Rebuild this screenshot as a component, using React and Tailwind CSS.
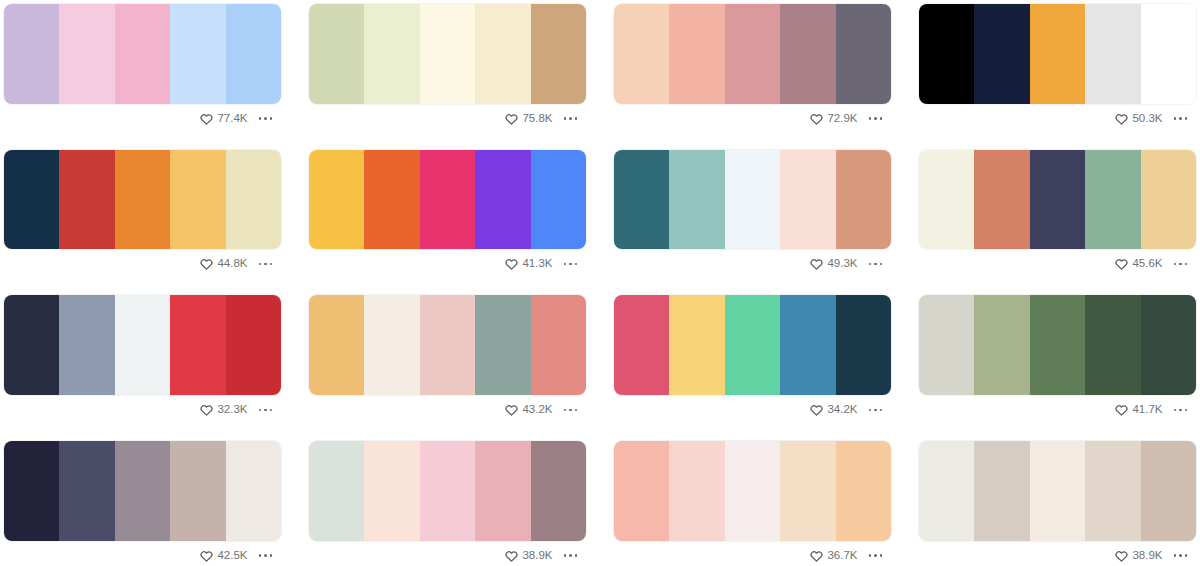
import React from "react";

const palettes = [
  { c: ["#c9b7dc", "#f5cbe0", "#f4b3cc", "#c6dffa", "#aad0f9"], l: "77.4K" },
  { c: ["#d1d9b5", "#eaefd0", "#fdf8e4", "#f6ecd0", "#cda67b"], l: "75.8K" },
  { c: ["#f7d0b8", "#f3b4a5", "#da999b", "#ab8189", "#6b6774"], l: "72.9K" },
  { c: ["#000000", "#151e3a", "#f0a83d", "#e5e5e5", "#ffffff"], l: "50.3K" },
  { c: ["#143049", "#c83a34", "#e8872f", "#f3c366", "#ebe3bb"], l: "44.8K" },
  { c: ["#f7c143", "#e9632c", "#e9336f", "#7a3be4", "#4f87f8"], l: "41.3K" },
  { c: ["#2e6b76", "#93c3bd", "#eff5f8", "#f9ded5", "#d9997c"], l: "49.3K" },
  { c: ["#f3f1e1", "#d48064", "#3d3f5c", "#8ab29b", "#eecf96"], l: "45.6K" },
  { c: ["#292d42", "#8e9aaf", "#eef2f2", "#e03b44", "#c92c33"], l: "32.3K" },
  { c: ["#eebf72", "#f5ece3", "#eccac3", "#8ba49d", "#e38b83"], l: "43.2K" },
  { c: ["#df5570", "#f8d377", "#62d4a3", "#3f89b0", "#1a3a4c"], l: "34.2K" },
  { c: ["#d6d5cb", "#a7b38d", "#607f58", "#3f5a41", "#354b3f"], l: "41.7K" },
  { c: ["#22233a", "#4a4c68", "#978c96", "#c5b2aa", "#efe9e3"], l: "42.5K" },
  { c: ["#d9e3dc", "#fae4da", "#f5ccd5", "#e9b1b7", "#9a7f85"], l: "38.9K" },
  { c: ["#f5b8aa", "#f6d6cf", "#f6eceb", "#f4dfc6", "#f6ca9e"], l: "36.7K" },
  { c: ["#ebeae3", "#d6ccc1", "#f3ebe0", "#e2d5ca", "#cfbdb0"], l: "38.9K" },
];

function Heart() {
  return (
    <svg width="13" height="12" viewBox="0 0 24 22" fill="none" stroke="#5f5f5f" strokeWidth="2.4" strokeLinejoin="round">
      <path d="M12 20.5 3.6 12.3A5.3 5.3 0 0 1 11.2 4.9L12 5.8l.8-.9a5.3 5.3 0 0 1 7.6 7.4Z" />
    </svg>
  );
}

export default function App() {
  return (
    <div className="w-[1200px] h-[566px] bg-white overflow-hidden px-[4px] pt-[4px]" style={{ fontFamily: '"Liberation Sans", Arial, sans-serif' }}>
      <div className="grid grid-cols-4 gap-x-[28px] gap-y-[16.2px]">
        {palettes.map((p, i) => (
          <div key={i} className="flex flex-col">
            <div className="h-[99.5px] rounded-[8px] overflow-hidden flex shadow-[0_0_0_1px_rgba(0,0,0,0.05)]">
              {p.c.map((col, j) => (
                <div key={j} className="flex-1" style={{ backgroundColor: col }} />
              ))}
            </div>
            <div className="h-[30px] flex items-center justify-end pr-[9px]">
              <Heart />
              <span className="ml-[4px] text-[11.5px] text-[#727272] leading-none">{p.l}</span>
              <span className="ml-[11px] flex gap-[3px] items-center">
                <span className="w-[2.5px] h-[2.5px] rounded-full bg-[#666]" />
                <span className="w-[2.5px] h-[2.5px] rounded-full bg-[#666]" />
                <span className="w-[2.5px] h-[2.5px] rounded-full bg-[#666]" />
              </span>
            </div>
          </div>
        ))}
      </div>
    </div>
  );
}
